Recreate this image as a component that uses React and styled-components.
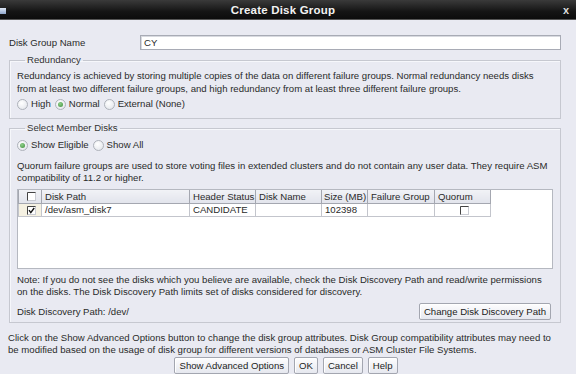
import React from 'react';
import styled, { createGlobalStyle } from 'styled-components';

const Global = createGlobalStyle`
  html, body { margin: 0; padding: 0; }
  body {
    width: 576px;
    height: 374px;
    overflow: hidden;
    background: #e9eaf2;
    font-family: "Liberation Sans", Arial, sans-serif;
    font-size: 9.6px;
    color: #2a2a2a;
  }
`;

const Window = styled.div`
  width: 576px;
  height: 374px;
  display: flex;
  flex-direction: column;
  overflow: hidden;
`;

const TitleBar = styled.div`
  height: 19px;
  flex: none;
  display: flex;
  align-items: center;
  justify-content: space-between;
  background: linear-gradient(#3a3a3a, #151515 60%, #0c0c0c);
  border-bottom: 1px solid #555;
  color: #f2f2f2;
`;

const WinIcon = styled.div`
  width: 6px;
  height: 6px;
  margin-top: 2px;
  background: linear-gradient(#dfe8f6, #8fa6cc);
`;

const Title = styled.div`
  font-size: 11.5px;
  font-weight: bold;
  letter-spacing: 0.2px;
`;

const Close = styled.div`
  width: 12px;
  padding-right: 4px;
  font-size: 11px;
  font-weight: bold;
  text-align: center;
  color: #ddd;
`;

const Body = styled.div`
  flex: 1;
  display: flex;
  flex-direction: column;
  padding: 15px 15px 0 8px;
  border-right: 1px solid #d4d6de;
  width: 553px;
  line-height: 12px;
`;

const NameRow = styled.div`
  display: flex;
  align-items: center;
  height: 15px;
  margin-left: 1px;
`;

const NameLabel = styled.div`
  width: 131px;
`;

const TextInput = styled.div`
  flex: 1;
  height: 13px;
  line-height: 13px;
  background: #fff;
  border: 1px solid #a8abb5;
  box-shadow: inset 1px 1px 0 #d8dae0;
  padding-left: 3px;
`;

const Group = styled.fieldset`
  margin: ${p => p.$top}px 0 0 1px;
  padding: 0 6px ${p => p.$bottom}px 7px;
  border: 1px solid #c6c8d0;
  box-shadow: inset 1px 1px 0 #f6f7fb;
  display: flex;
  flex-direction: column;
  min-width: 0;
`;

const Legend = styled.legend`
  padding: 0 2px;
  margin-left: 8px;
  line-height: 12px;
  color: #333;
`;

const Para = styled.div`
  margin-top: ${p => p.$top || 0}px;
  line-height: ${p => p.$lh || 12}px;
  white-space: nowrap;
`;

const RadioRow = styled.div`
  display: flex;
  align-items: center;
  gap: 4px;
  height: 14px;
  margin-top: ${p => p.$top}px;
`;

const RadioItem = styled.label`
  display: flex;
  align-items: center;
  gap: 3px;
`;

const Circle = styled.span`
  width: 9px;
  height: 9px;
  border-radius: 50%;
  border: 1px solid #aeb2ba;
  background: radial-gradient(circle at 40% 35%, #ffffff, #dfe2e8);
  display: flex;
  align-items: center;
  justify-content: center;
  &::after {
    content: '';
    width: 5px;
    height: 5px;
    border-radius: 50%;
    background: ${p => (p.$on ? 'radial-gradient(circle at 40% 35%, #8fd08a, #3d8d3b)' : 'transparent')};
  }
`;

const Radio = ({ on, children }) => (
  <RadioItem>
    <Circle $on={on} />
    {children}
  </RadioItem>
);

const TableBox = styled.div`
  margin-top: 5px;
  height: 78px;
  background: #fff;
  border: 1px solid #b5b8c0;
  width: 534px;
  overflow: hidden;
`;

const Grid = styled.table`
  border-collapse: collapse;
  table-layout: fixed;
  width: 472px;
  font-size: 9.6px;
`;

const Th = styled.th`
  width: ${p => p.$w}px;
  height: 13px;
  padding: 0 0 0 ${p => p.$pad ?? 3}px;
  text-align: ${p => (p.$center ? 'center' : 'left')};
  font-weight: normal;
  background: linear-gradient(#f1f2f6, #e2e4ec);
  border: 1px solid #a4a7b0;
  border-top: none;
  white-space: nowrap;
  overflow: hidden;
`;

const Td = styled.td`
  height: 12px;
  padding: 0 0 0 3px;
  text-align: ${p => (p.$center ? 'center' : 'left')};
  background: ${p => (p.$focus ? '#f5f1e2' : '#fff')};
  border: 1px solid #c3c5cc;
  white-space: nowrap;
  overflow: hidden;
`;

const Check = ({ on }) => (
  <svg width="9" height="9" viewBox="0 0 9 9" style={{ display: 'block', margin: '0 auto' }}>
    <rect x="0.5" y="0.5" width="8" height="8" fill="#fff" stroke="#c9cbd2" />
    <path d="M0.5 8.5 V0.5 H8.5" fill="none" stroke="#444" />
    {on && <path d="M2 4.2 L3.8 6.6 L7.2 2" fill="none" stroke="#111" strokeWidth="1.4" />}
  </svg>
);

const PathRow = styled.div`
  display: flex;
  align-items: center;
  justify-content: space-between;
  margin-top: 5px;
  padding-right: 3px;
`;

const Button = styled.button`
  height: 17px;
  padding: 0 4px;
  font-family: "Liberation Sans", Arial, sans-serif;
  font-size: 9.6px;
  color: #222;
  background: linear-gradient(#fdfdfe, #e6e8ef);
  border: 1px solid #a3a6b0;
  border-radius: 2px;
  box-shadow: inset 1px 1px 0 #fff;
  line-height: 14px;
`;

const Footer = styled.div`
  display: flex;
  justify-content: center;
  gap: 5px;
  margin-top: 1px;
  padding-left: 3px;
`;

export default function App() {
  return (
    <Window>
      <Global />
      <TitleBar>
        <WinIcon />
        <Title>Create Disk Group</Title>
        <Close>x</Close>
      </TitleBar>
      <Body>
        <NameRow>
          <NameLabel>Disk Group Name</NameLabel>
          <TextInput>CY</TextInput>
        </NameRow>

        <Group $top={4} $bottom={7}>
          <Legend>Redundancy</Legend>
          <Para $top={3} $lh={13}>
            Redundancy is achieved by storing multiple copies of the data on different failure groups. Normal redundancy needs disks
            <br />
            from at least two different failure groups, and high redundancy from at least three different failure groups.
          </Para>
          <RadioRow $top={2}>
            <Radio>High</Radio>
            <Radio on>Normal</Radio>
            <Radio>External (None)</Radio>
          </RadioRow>
        </Group>

        <Group $top={3} $bottom={2}>
          <Legend>Select Member Disks</Legend>
          <RadioRow $top={4}>
            <Radio on>Show Eligible</Radio>
            <Radio>Show All</Radio>
          </RadioRow>
          <Para $top={8}>
            Quorum failure groups are used to store voting files in extended clusters and do not contain any user data. They require ASM
            <br />
            compatibility of 11.2 or higher.
          </Para>
          <TableBox>
            <Grid>
              <thead>
                <tr>
                  <Th $w={19} $center><Check /></Th>
                  <Th $w={144}>Disk Path</Th>
                  <Th $w={62}>Header Status</Th>
                  <Th $w={62}>Disk Name</Th>
                  <Th $w={43} $pad={2}>Size (MB)</Th>
                  <Th $w={63}>Failure Group</Th>
                  <Th $w={52}>Quorum</Th>
                </tr>
              </thead>
              <tbody>
                <tr>
                  <Td $center $focus><Check on /></Td>
                  <Td>/dev/asm_disk7</Td>
                  <Td>CANDIDATE</Td>
                  <Td></Td>
                  <Td>102398</Td>
                  <Td></Td>
                  <Td $center><Check /></Td>
                </tr>
              </tbody>
            </Grid>
          </TableBox>
          <Para $top={5}>
            Note: If you do not see the disks which you believe are available, check the Disk Discovery Path and read/write permissions
            <br />
            on the disks. The Disk Discovery Path limits set of disks considered for discovery.
          </Para>
          <PathRow>
            <span>Disk Discovery Path: /dev/</span>
            <Button>Change Disk Discovery Path</Button>
          </PathRow>
        </Group>

        <Para $top={9}>
          Click on the Show Advanced Options button to change the disk group attributes. Disk Group compatibility attributes may need to
          <br />
          be modified based on the usage of disk group for different versions of databases or ASM Cluster File Systems.
        </Para>
        <Footer>
          <Button>Show Advanced Options</Button>
          <Button>OK</Button>
          <Button>Cancel</Button>
          <Button>Help</Button>
        </Footer>
      </Body>
    </Window>
  );
}
